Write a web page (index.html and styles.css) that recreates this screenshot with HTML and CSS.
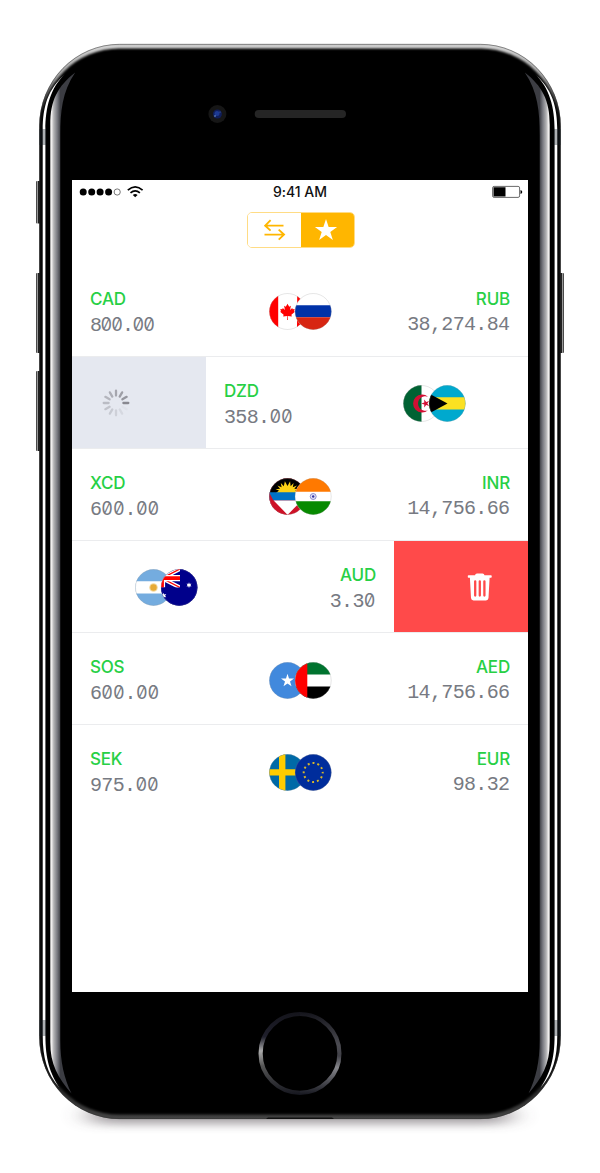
FILE: index.html
```html
<!DOCTYPE html>
<html lang="en">
<head>
<meta charset="utf-8">
<title>Currency favourites</title>
<link rel="stylesheet" href="styles.css">
</head>
<body>
<div class="phone">
  <svg class="shell" viewBox="0 0 600 1173" width="600" height="1173" aria-hidden="true">
    <defs>
      <linearGradient id="rim" x1="0" y1="43" x2="0" y2="1119" gradientUnits="userSpaceOnUse">
        <stop offset="0" stop-color="#b8b8b8"/><stop offset=".003" stop-color="#d2d2d2"/><stop offset=".03" stop-color="#aaa"/><stop offset=".065" stop-color="#111"/><stop offset=".95" stop-color="#111"/><stop offset="1" stop-color="#444"/>
      </linearGradient>
      <linearGradient id="side" x1="50" y1="0" x2="60.5" y2="0" gradientUnits="userSpaceOnUse">
        <stop offset="0" stop-color="#c8c8c8"/><stop offset=".15" stop-color="#f2f0f0"/><stop offset=".35" stop-color="#b4b4b6"/><stop offset=".7" stop-color="#77787f"/><stop offset="1" stop-color="#3c3d43"/>
      </linearGradient>
      <linearGradient id="key" x1="36" y1="0" x2="41" y2="0" gradientUnits="userSpaceOnUse">
        <stop offset="0" stop-color="#222"/><stop offset=".3" stop-color="#999"/><stop offset=".45" stop-color="#222"/><stop offset="1" stop-color="#111"/>
      </linearGradient>
      <linearGradient id="ringL" x1="0" y1="1012" x2="0" y2="1095" gradientUnits="userSpaceOnUse">
        <stop offset="0" stop-color="#14141b"/><stop offset=".3" stop-color="#20202c"/><stop offset=".47" stop-color="#aaa"/><stop offset=".65" stop-color="#555"/><stop offset="1" stop-color="#15161e"/>
      </linearGradient>
      <linearGradient id="ringR" x1="0" y1="1012" x2="0" y2="1095" gradientUnits="userSpaceOnUse">
        <stop offset="0" stop-color="#14141b"/><stop offset=".4" stop-color="#4c4c52"/><stop offset=".53" stop-color="#414148"/><stop offset=".67" stop-color="#85858a"/><stop offset="1" stop-color="#15161e"/>
      </linearGradient>
      <filter id="soft" x="-10%" y="-300%" width="120%" height="700%"><feGaussianBlur stdDeviation="14 5"/></filter>
      <filter id="edge" x="-5%" y="-5%" width="110%" height="110%"><feGaussianBlur stdDeviation="1.3"/></filter>
      <clipPath id="body"><rect x="39.3" y="44" width="521.4" height="1075" rx="80" ry="82"/></clipPath>
      <g id="gloss">
        <path d="M65.500 73.500C50 88 45.400 108 45.400 130V1035C45.400 1060 50 1073 59.500 1088C47 1073 42.700 1058 42.700 1035V130C42.700 106 48 89 65.500 73.500Z" fill="#fff"/>
        <path d="M75.200 72.500C62 92 60.300 112 60.300 135V1040C60.300 1062 64 1078 71.500 1093.500C58 1078 50.200 1064 50.200 1042V125C50.200 100 58 86 75.200 72.500Z" fill="url(#side)"/>
        <path d="M39.300 129h7v16h-7zM39.300 1020h7v16h-7z" fill="#151d26" opacity=".35"/>
      </g>
    </defs>
    <rect x="90" y="1107" width="420" height="17" rx="8" fill="#4a3f46" opacity=".5" filter="url(#soft)"/>
    <rect x="36" y="181" width="5" height="42.500" rx="1" fill="url(#key)"/>
    <rect x="36" y="273" width="5" height="80" rx="1" fill="url(#key)"/>
    <rect x="36" y="371" width="5" height="80" rx="1" fill="url(#key)"/>
    <rect x="36" y="273" width="5" height="80" rx="1" fill="url(#key)" transform="translate(600)scale(-1 1)"/>
    <g clip-path="url(#body)">
      <rect x="39" y="43" width="522" height="1077" fill="url(#rim)"/>
      <rect x="41" y="48.500" width="518" height="1066" rx="78" ry="79" fill="#000" filter="url(#edge)"/>
    </g>
    <rect x="39.600" y="44.300" width="520.800" height="1074.400" rx="80" ry="82" fill="none" stroke="#333" stroke-width=".7" opacity=".7"/>
    <use href="#gloss"/>
    <use href="#gloss" transform="translate(600)scale(-1 1)"/>
    <path d="M266 1119l2-1.500h64l2 1.500z" fill="#111"/>
    <circle cx="217.400" cy="114" r="9" fill="#161616"/>
    <circle cx="217.400" cy="114" r="4.500" fill="#101e5a"/>
    <circle cx="217" cy="113.600" r="2.500" fill="#1d3a94"/>
    <circle cx="215" cy="116" r=".8" fill="#7aa6e0"/>
    <circle cx="220" cy="112" r=".6" fill="#5677b8"/>
    <rect x="254.700" y="110" width="91.300" height="8" rx="4" fill="#252525"/>
    <path d="M300 1014A39.300 39.300 0 0 0 300 1092.800" fill="none" stroke="url(#ringL)" stroke-width="4.200"/>
    <path d="M300 1014A39.300 39.300 0 0 1 300 1092.800" fill="none" stroke="url(#ringR)" stroke-width="4.200"/>
  </svg>

  <main class="screen">
    <header class="status">
      <svg class="signal" width="66" height="14" viewBox="0 0 66 14">
        <circle cx="4.200" cy="7" r="3.500"/><circle cx="12.700" cy="7" r="3.500"/><circle cx="21.100" cy="7" r="3.500"/><circle cx="29.600" cy="7" r="3.500"/>
        <circle cx="38.200" cy="7" r="3.100" fill="none" stroke="#555" stroke-width=".8"/>
        <g fill="none" stroke="#000" stroke-width="1.700"><path d="M48.800 5.200Q56.200-1.400 63.600 5.200"/><path d="M51.500 7.900Q56.200 3.900 60.900 7.900"/></g>
        <path d="M53.800 9.900Q56.200 8 58.600 9.900L56.200 12.300Z"/>
      </svg>
      <span class="time">9:41 AM</span>
      <svg class="battery" width="31" height="14" viewBox="0 0 31 14">
        <rect x=".6" y="1.400" width="27" height="11" rx="1.500" fill="#fff" stroke="#444" stroke-width=".8"/>
        <path d="M1.500 2.300h12v9.200h-12zM28.500 5q1.800.3 1.800 2t-1.800 2z"/>
      </svg>
    </header>

    <nav class="tabs">
      <button class="tab" aria-label="Convert"><svg width="24" height="24" viewBox="0 0 24 24"><path d="M7.600 2.200 2.200 7.600l5.400 5M2.500 7.600h18M15.700 11.600l5.300 5-5.300 5M1.500 16.600H20.700" fill="none" stroke="#ffb600" stroke-width="1.900"/></svg></button>
      <button class="tab tab-active" aria-label="Favourites"><svg class="star" width="24" height="24" viewBox="0 0 24 24"><path d="M12 1l2.650 8h8.450l-6.800 4.950 2.550 8.050L12 17.100 5.150 22l2.550-8.050L.9 9h8.450z" fill="#fff"/></svg></button>
    </nav>

    <section class="list">
      <article class="row">
        <div class="pair">
          <div class="side"><span class="code">CAD</span><span class="sum tight">8<i>00</i>.<i>00</i></span></div>
          <svg class="flags f1" viewBox="0 0 63 37">
            <defs><clipPath id="l"><circle cx="18.500" cy="18.500" r="18.200"/></clipPath><clipPath id="r"><circle cx="44.200" cy="18.500" r="18.200"/></clipPath></defs>
            <g clip-path="url(#l)"><path d="M0 0h37v37H0z" fill="#fff"/><path d="M0 0h9.200v37H0zM28.200 0H37v37h-9z" fill="#f00"/><path d="M18.500 10.700l1.700 3 1.700-.9-.8 4.300 2.100-2 .5 1.200 2-.3-.7 2.200.9.600-3.500 3 .4 1.700-4-.5.100 3.900h-.8l.1-3.900-4 .5.400-1.700-3.500-3 .9-.6-.7-2.200 2 .3.500-1.200 2.100 2-.8-4.300 1.700.9z" fill="#f00"/></g>
            <circle class="line" cx="18.500" cy="18.500" r="18"/>
            <g clip-path="url(#r)"><path d="M25 0h38v37H25z" fill="#fff"/><path d="M25 12.300h38v12H25z" fill="#0032a8"/><path d="M25 24.300h38V37H25z" fill="#d72612"/></g>
            <circle class="line" cx="44.200" cy="18.500" r="18"/>
          </svg>
          <div class="side end"><span class="code">RUB</span><span class="sum">38,274.84</span></div>
        </div>
      </article>

      <article class="row">
        <div class="loading"><svg width="28" height="28" viewBox="-14 -14 28 28" stroke="#888890" stroke-width="2.300" stroke-linecap="round">
          <path d="M7.400 0H12.300"/><path d="M7.400 0H12.300" transform="rotate(-30)" opacity=".85"/><path d="M7.400 0H12.300" transform="rotate(-60)" opacity=".76"/><path d="M7.400 0H12.300" transform="rotate(-90)" opacity=".68"/><path d="M7.400 0H12.300" transform="rotate(-120)" opacity=".6"/><path d="M7.400 0H12.300" transform="rotate(-150)" opacity=".52"/><path d="M7.400 0H12.300" transform="rotate(180)" opacity=".45"/><path d="M7.400 0H12.300" transform="rotate(150)" opacity=".38"/><path d="M7.400 0H12.300" transform="rotate(120)" opacity=".31"/><path d="M7.400 0H12.300" transform="rotate(90)" opacity=".24"/><path d="M7.400 0H12.300" transform="rotate(60)" opacity=".16"/><path d="M7.400 0H12.300" transform="rotate(30)" opacity=".06"/>
        </svg></div>
        <div class="pair">
          <div class="side"><span class="code">DZD</span><span class="sum">358.<i>00</i></span></div>
          <svg class="flags f1" viewBox="0 0 63 37">
            <g clip-path="url(#l)"><path d="M0 0h37v37H0z" fill="#fff"/><path d="M0 0h18.500v37H0z" fill="#006233"/><path d="M25 11.700a9 9 0 1 0 0 13.600 7.300 7.300 0 1 1 0-13.600z" fill="#d21034"/><path d="M18.300 18.500l3-1-.1-3 2 2.400 3-1-1.900 2.600 1.900 2.600-3-1-2 2.400.1-3z" fill="#d21034"/></g>
            <circle class="line" cx="18.500" cy="18.500" r="18"/>
            <g clip-path="url(#r)"><path d="M25 0h38v37H25z" fill="#00a9ce"/><path d="M25 12.300h38v12.300H25z" fill="#fbe122"/><path d="M25 8l19.500 10.500L25 29z"/></g>
            <circle class="line" cx="44.200" cy="18.500" r="18"/>
          </svg>
          <div class="side"></div>
        </div>
      </article>

      <article class="row">
        <div class="pair">
          <div class="side"><span class="code">XCD</span><span class="sum">6<i>00</i>.<i>00</i></span></div>
          <svg class="flags f2" viewBox="0 0 63 37">
            <g clip-path="url(#l)"><path d="M0 0h37v37H0z" fill="#ce1126"/><path d="M-1 0h39v15H-1z"/><path d="M7 15l3-2.600-3.500-1.200 4.600-.4-2.700-3.200 4.200 1.600-.8-4.200 3 3.300 1.100-5 2.600 4.800 2.600-4.800.500 5 3-3.300-.8 4.200 4.200-1.600-2.700 3.200 4.600.4-3.500 1.200 3 2.600z" fill="#fcd116"/><path d="M0 14.300h37v8.200H0z" fill="#0072c6"/><path d="M4.300 22.400h28.400L18.500 37z" fill="#fff"/><path d="M0 14.300l4.500 8.200L18.500 37H0z" fill="#ce1126"/></g>
            <circle class="line" cx="18.500" cy="18.500" r="18"/>
            <g clip-path="url(#r)"><path d="M25 0h38v37H25z" fill="#fff"/><path d="M25 0h38v13.700H25z" fill="#ff7900"/><path d="M25 23.300h38V37H25z" fill="#078a00"/><circle cx="44.200" cy="18.500" r="3" fill="#e4e4f6" stroke="#6668bd" stroke-width=".7"/><circle cx="44.200" cy="18.500" r="1.200" fill="#3436a3"/></g>
            <circle class="line" cx="44.200" cy="18.500" r="18"/>
          </svg>
          <div class="side end"><span class="code">INR</span><span class="sum">14,756.66</span></div>
        </div>
      </article>

      <article class="row row-left">
        <div class="pair">
          <div class="side"></div>
          <svg class="flags f1" viewBox="0 0 63 37">
            <g clip-path="url(#l)"><path d="M0 0h37v37H0z" fill="#74acdf"/><path d="M0 12.300h37v12.300H0z" fill="#fff"/><circle cx="18.500" cy="18.500" r="4.300" fill="#f3d9a0"/><circle cx="18.500" cy="18.500" r="3.200" fill="#e7aa35"/></g>
            <circle class="line" cx="18.500" cy="18.500" r="18"/>
            <g clip-path="url(#r)"><path d="M25 0h38v37H25z" fill="#00008b"/><path d="M9 0l36 18.500M45 0 9 18.500" stroke="#fff" stroke-width="4"/><path d="M9 0l36 18.500M45 0 9 18.500" stroke="#f00" stroke-width="1.400"/><path d="M25 9.200h20M27 0v18.500" stroke="#fff" stroke-width="6.200"/><path d="M25 9.200h20M27 0v18.500" stroke="#f00" stroke-width="3.800"/><path d="M45 0h18v37H25V18.500h20z" fill="#00008b"/><path d="M54 13.300l.7 1.600 1.700-.3-.9 1.500.9 1.400-1.700-.2-.7 1.600-.7-1.600-1.700.2.900-1.400-.9-1.500 1.700.3zM28.300 24l1 1.600 2-.5-1.200 1.700 1.200 1.400-2-.3-.6 1.600-1-1.800-2 .2 1.200-1.500-.8-1.700 1.600.5z" fill="#fff"/></g>
            <circle class="line" cx="44.200" cy="18.500" r="18"/>
          </svg>
          <div class="side end"><span class="code">AUD</span><span class="sum">3.3<i>0</i></span></div>
        </div>
        <div class="remove"><svg width="26" height="28" viewBox="0 0 26 28"><path d="M.800 4V3q0-.7.700-.7H8Q8.300.4 10 .4h5.500q1.700 0 2 1.900h6.500q.7 0 .7.700v1q0 .7-.7.700h-1.400L21.500 25q-.2 2.400-2.500 2.400H6.500Q4.200 27.400 4 25L2.900 4.700H1.500Q.8 4.700.8 4z" fill="#fff"/><path d="M8.200 8.300v14.300M12.800 8.300v14.300M17.400 8.300v14.300" stroke="#ff4a4a" stroke-width="2.300" stroke-linecap="round"/></svg></div>
      </article>

      <article class="row">
        <div class="pair">
          <div class="side"><span class="code">SOS</span><span class="sum">6<i>00</i>.<i>00</i></span></div>
          <svg class="flags f2" viewBox="0 0 63 37">
            <g clip-path="url(#l)"><path d="M0 0h37v37H0z" fill="#4189dd"/><path d="M18.500 11.800l1.500 4.700h5l-4 3 1.500 4.800-4-2.900-4 2.900 1.500-4.800-4-3h5z" fill="#fff"/></g>
            <circle class="line" cx="18.500" cy="18.500" r="18"/>
            <g clip-path="url(#r)"><path d="M25 0h38v37H25z" fill="#fff"/><path d="M25 0h38v12.400H25z" fill="#00732f"/><path d="M25 24.600h38V37H25z"/><path d="M25 0h13.300v37H25z" fill="#f00"/></g>
            <circle class="line" cx="44.200" cy="18.500" r="18"/>
          </svg>
          <div class="side end"><span class="code">AED</span><span class="sum">14,756.66</span></div>
        </div>
      </article>

      <article class="row">
        <div class="pair">
          <div class="side"><span class="code">SEK</span><span class="sum">975.<i>00</i></span></div>
          <svg class="flags f2" viewBox="0 0 63 37">
            <g clip-path="url(#l)"><path d="M0 0h37v37H0z" fill="#006aa7"/><path d="M10 0h6.400v37H10zM0 15.200h37v6.200H0z" fill="#fecc00"/></g>
            <circle class="line" cx="18.500" cy="18.500" r="18"/>
            <g clip-path="url(#r)"><path d="M25 0h38v37H25z" fill="#002d9c"/><circle cx="44.200" cy="18.500" r="9.500" fill="none" stroke="#d8b72a" stroke-width="2" stroke-dasharray="2 2.974" stroke-dashoffset="1"/></g>
            <circle class="line" cx="44.200" cy="18.500" r="18"/>
          </svg>
          <div class="side end"><span class="code">EUR</span><span class="sum">98.32</span></div>
        </div>
      </article>
    </section>
  </main>
</div>
</body>
</html>
```
FILE: styles.css
```css
* { box-sizing: border-box; }
body { margin: 0; background: #fff; }
.phone {
  position: relative;
  width: 600px;
  height: 1173px;
  padding: 180px 72px 181px;
}
.shell { position: absolute; inset: 0; display: block; }
.screen {
  position: relative;
  width: 456px;
  height: 812px;
  overflow: hidden;
  background: #fff;
}
.status {
  display: grid;
  grid-template-columns: 1fr auto 1fr;
  align-items: center;
  height: 24px;
  padding: 0 5px 0 7px;
}
.status svg { display: block; }
.battery { justify-self: end; }
.time {
  margin-left: -2px;
  font: 500 14px/24px Inter, sans-serif;
  letter-spacing: -0.05px;
  color: #111;
}
.tabs {
  display: flex;
  width: 108px;
  height: 36px;
  margin: 8px 0 0 175px;
  border: 1px solid #ffdc85;
  border-radius: 5px;
  overflow: hidden;
}
.tab {
  display: flex;
  flex: 1;
  align-items: center;
  justify-content: center;
  padding: 0;
  border: 0;
  background: #fff;
}
.tab-active { background: #ffb600; }
.star { margin: 0 3px 1px 0; }
.list { padding-top: 17px; }
.row {
  display: flex;
  height: 92px;
  overflow: hidden;
  border-bottom: 1px solid #ebecee;
}
.row:last-child { border-bottom: 0; }
.row-left { justify-content: flex-end; }
.pair {
  display: grid;
  flex: none;
  grid-template-columns: 1fr 63px 1fr;
  width: 456px;
  padding: 0 18px;
}
.side { display: flex; flex-direction: column; padding-top: 22px; }
.end { align-items: flex-end; }
.code {
  font: 500 17px/24px Inter, sans-serif;
  letter-spacing: -0.2px;
  color: #27d045;
}
.sum {
  font: 400 20px/28px "Liberation Mono", monospace;
  letter-spacing: -0.65px;
  color: #777a82;
  white-space: nowrap;
}
.end .sum { padding-right: 0.6px; }
.sum i {
  font-family: Inter, sans-serif;
  font-size: 18px;
  font-style: normal;
  letter-spacing: -0.1px;
  font-feature-settings: "zero", "tnum";
}
.tight { letter-spacing: -1.5px; }
.tight i { letter-spacing: -0.9px; }
.flags { display: block; width: 63px; height: 37px; }
.f1 { margin-top: 28px; }
.f2 { margin-top: 29px; }
.line { fill: none; stroke: #999; stroke-opacity: .35; stroke-width: .7; }
.loading, .remove {
  display: flex;
  flex: none;
  align-items: center;
  width: 134px;
}
.loading { padding-left: 30px; background: #e5e8f0; }
.remove { padding-left: 73px; background: #ff4a4a; }
```
